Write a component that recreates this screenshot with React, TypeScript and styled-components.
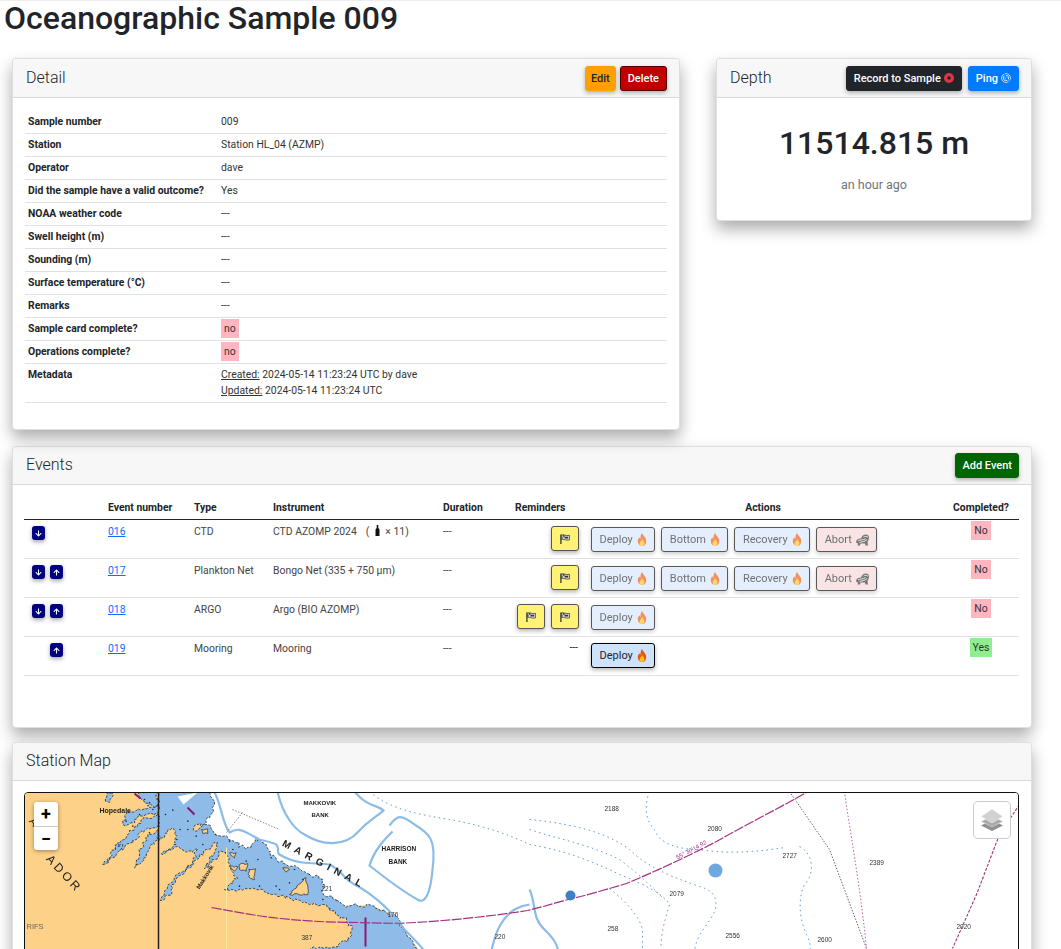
import React from 'react';
import styled, { createGlobalStyle } from 'styled-components';
import { FaArrowDown, FaArrowUp } from 'react-icons/fa';

const GlobalStyle = createGlobalStyle`
    html, body {
        margin: 0;
        height: 949px;
        overflow: hidden;
        background: #fff;
        font-family: Roboto, 'Liberation Sans', sans-serif;
        color: #212529;
    }
    * {
        box-sizing: border-box;
    }
`;

const Page = styled.div`
    width: 1061px;
    border-top: 1px solid #eee;
    padding: 0 29px 0 12px;
`;

const Heading = styled.h1`
    margin: 0 0 22px -8px;
    font-size: 32px;
    line-height: 35px;
    font-weight: 500;
`;

const TopRow = styled.div`
    display: flex;
    align-items: flex-start;
    gap: 36px;
    margin-bottom: 16px;
`;

const Card = styled.section<{ $width?: number; $gap?: number }>`
    width: ${({ $width }) => ($width ? `${$width}px` : '100%')};
    flex: none;
    background: #fff;
    border: 1px solid rgba(0, 0, 0, 0.125);
    border-radius: 4px;
    box-shadow: 0 8px 16px rgba(0, 0, 0, 0.33);
    margin-bottom: ${({ $gap }) => $gap ?? 0}px;
`;

const CardHeader = styled.header<{ $compact?: boolean }>`
    height: ${({ $compact }) => ($compact ? 38 : 39)}px;
    display: flex;
    align-items: center;
    justify-content: space-between;
    padding: 0 12px 0 13px;
    background: #f7f7f7;
    border-bottom: 1px solid rgba(0, 0, 0, 0.125);
    border-radius: 3px 3px 0 0;
`;

const CardTitle = styled.h2`
    margin: 0 0 2px;
    font-size: 16px;
    font-weight: 300;
`;

const HeaderActions = styled.div`
    display: flex;
    align-items: center;
    gap: 4px;
`;

const DepthActions = styled(HeaderActions)`
    gap: 6px;
`;

const ActionButton = styled.button<{ $bg: string; $fg?: string; $edge?: string; $pad?: number }>`
    height: 25px;
    padding: 0 ${({ $pad }) => $pad ?? 6}px;
    display: inline-flex;
    align-items: center;
    gap: 3px;
    font: 500 11px Roboto, sans-serif;
    color: ${({ $fg }) => $fg ?? '#fff'};
    background: ${({ $bg }) => $bg};
    border: 1px solid ${({ $edge, $bg }) => $edge ?? $bg};
    border-radius: 3px;
    box-shadow: 0 2px 4px rgba(0, 0, 0, 0.3);
`;

const DetailBody = styled.div`
    padding: 12px 12px 26px;
`;

const DetailTable = styled.table`
    width: 100%;
    border-collapse: collapse;
    table-layout: fixed;
    font-size: 10.4px;
`;

const DetailRow = styled.tr`
    border-bottom: 1px solid #dee2e6;
`;

const DetailLabel = styled.th`
    width: 192px;
    height: 23px;
    padding: 0 4px 0 3px;
    font-weight: 700;
    text-align: left;
    vertical-align: middle;
    white-space: nowrap;
`;

const DetailValue = styled.td`
    height: 23px;
    padding: 0 4px;
    vertical-align: middle;
    color: #333;
`;

const MetaLabel = styled(DetailLabel)`
    height: 39px;
    padding-top: 4px;
    vertical-align: top;
`;

const MetaValue = styled(DetailValue)`
    padding-top: 3px;
    vertical-align: top;
    line-height: 16px;
`;

const Underlined = styled.span`
    text-decoration: underline;
`;

const Flag = styled.span<{ $ok?: boolean }>`
    display: inline-block;
    padding: 0 3px;
    line-height: 19px;
    color: #333;
    background: ${({ $ok }) => ($ok ? '#90ee90' : '#ffb6c1')};
`;

const DepthBody = styled.div`
    height: 122px;
    padding-top: 27px;
    text-align: center;
`;

const DepthValue = styled.div`
    font-size: 32px;
    line-height: 36px;
    font-weight: 500;
`;

const DepthAge = styled.div`
    margin-top: 16px;
    font-size: 12.5px;
    color: #6c757d;
`;

const EventsBody = styled.div`
    height: 242px;
    padding: 15px 12px 0 11px;
`;

const EventsTable = styled.table`
    width: 995px;
    border-collapse: collapse;
    table-layout: fixed;
    font-size: 10.4px;
    color: #444;
`;

const HeadCell = styled.th<{ $center?: boolean }>`
    height: 20px;
    padding: 0 4px 5px;
    text-align: ${({ $center }) => ($center ? 'center' : 'left')};
    vertical-align: bottom;
    font-weight: 700;
    color: #212529;
    border-bottom: 1px solid #212529;
`;

const EventRow = styled.tr`
    height: 39px;
    border-bottom: 1px solid #dee2e6;
`;

const EventCell = styled.td`
    padding: 5px 4px 0;
    vertical-align: top;
    text-align: left;
`;

const CompletedCell = styled(EventCell)`
    padding-top: 1px;
    text-align: center;
`;

const EventLink = styled.a`
    color: #0d6efd;
    text-decoration: underline;
`;

const MoveGroup = styled.div`
    display: flex;
    gap: 5px;
    padding: 1px 0 0 4px;
`;

const MoveButton = styled.button<{ $hidden?: boolean }>`
    width: 13px;
    height: 14px;
    padding: 0;
    display: flex;
    align-items: center;
    justify-content: center;
    color: #fff;
    background: #000080;
    border: 0;
    border-radius: 3px;
    box-shadow: 0 2px 4px rgba(0, 0, 0, 0.35);
    font-size: 7px;
    visibility: ${({ $hidden }) => ($hidden ? 'hidden' : 'visible')};
`;

const ReminderCell = styled(EventCell)`
    padding: 6px 4px 0 0;
    text-align: right;
`;

const ReminderGroup = styled.div`
    display: flex;
    justify-content: flex-end;
    gap: 6px;
`;

const ReminderButton = styled.button`
    width: 28px;
    height: 25px;
    padding: 0;
    display: flex;
    align-items: center;
    justify-content: center;
    background: #fff275;
    border: 1px solid #555;
    border-radius: 3px;
    box-shadow: 0 2px 4px rgba(0, 0, 0, 0.3);
`;

const NoReminder = styled.span`
    display: block;
    margin-top: -2px;
    padding-right: 1px;
    color: #212529;
`;

const ActionsGroup = styled.div`
    display: flex;
    gap: 6px;
    padding: 2px 0 0 4px;
`;

const StepButton = styled.button<{ $abort?: boolean; $ready?: boolean }>`
    height: 25px;
    margin-top: ${({ $ready }) => ($ready ? -1 : 0)}px;
    padding: 0 7.5px;
    display: inline-flex;
    align-items: center;
    gap: 4px;
    font: 400 11px Roboto, sans-serif;
    color: #212529;
    background: ${({ $abort, $ready }) => ($abort ? '#f5d5d8' : $ready ? '#cfe2fb' : '#d8e6fb')};
    border: 1px solid #000;
    border-radius: 3px;
    opacity: ${({ $ready }) => ($ready ? 1 : 0.65)};
    box-shadow: 0 2px 4px rgba(0, 0, 0, 0.3);
`;

const BottleNote = styled.span`
    margin-left: 9px;
`;

const Bottle = styled.svg`
    margin: 0 5px 0 6px;
    vertical-align: -1px;
`;

const MapBody = styled.div`
    padding: 11px 12px 12px 11px;
`;

const MapFrame = styled.div`
    position: relative;
    height: 400px;
    overflow: hidden;
    border: 1.5px solid #111;
    border-radius: 4px;
    background: #fff;
`;

const ChartImage = styled.svg`
    display: block;
    filter: blur(0.4px);
`;

const ZoomControl = styled.div`
    position: absolute;
    top: 9px;
    left: 9px;
    width: 24px;
    background: #fff;
    border-radius: 3px;
    box-shadow: 0 1px 4px rgba(0, 0, 0, 0.4);
`;

const ZoomButton = styled.button`
    display: block;
    width: 24px;
    height: 24px;
    padding: 0;
    background: none;
    border: 0;
    font: 700 18px/24px Roboto, sans-serif;
    color: #000;
    & + & {
        border-top: 1px solid #ccc;
    }
`;

const LayersControl = styled.div`
    position: absolute;
    top: 8px;
    right: 7px;
    width: 38px;
    height: 38px;
    display: flex;
    align-items: center;
    justify-content: center;
    background: #fff;
    border: 1px solid #ccc;
    border-radius: 5px;
`;

const Flame = () => (
    <svg width="10" height="13" viewBox="0 0 10 14">
        <path
            d="M5 0C5.6 2.4 9.6 4.6 9.6 8.8C9.6 11.8 7.6 14 5 14C2.4 14 .4 11.9 .4 9C.4 7 1.4 5.6 2.2 4.6C2.4 5.6 2.8 6.2 3.4 6.4C3.2 4 3.6 1.8 5 0Z"
            fill="#e8590c"
        />
        <path
            d="M5.2 6.4C5.6 8 7.6 9 7.6 11C7.6 12.6 6.4 14 5 14C3.6 14 2.4 12.8 2.4 11.2C2.4 9.6 4.6 8.4 5.2 6.4Z"
            fill="#fcc21b"
        />
    </svg>
);

const Skunk = () => (
    <svg width="13" height="12" viewBox="0 0 13 12">
        <path
            d="M0 8.500C0 6 2 4.500 5 4.500C6 2 7.500 .5 10 .5C12 .5 13 2 13 3.500C13 5.500 12 6.500 11.500 8L12 11.500H9.500L9 9.500H4.500L4 11.500H1.500L2 9.500Z"
            fill="#2f2f2f"
        />
        <path d="M2 7C4 5.500 7 6.500 9.500 4.500M3.500 8.500C6 7.500 8.500 8 11 5.500M7.500 3C9 2 10.500 2.200 12 3.200" stroke="#eee" strokeWidth=".9" fill="none" />
    </svg>
);

const CheckeredFlag = () => (
    <svg width="10" height="10" viewBox="0 0 11 11">
        <path d="M1 0.500V11" stroke="#333" strokeWidth="1.4" />
        <path d="M1.500 1C4 0 6 2.500 10.500 1.500V6.500C6 7.500 4 5 1.500 6Z" fill="#ddd" stroke="#333" strokeWidth=".8" />
        <path d="M3 1V3H5V5H7V3H5V1.500ZM7 3H9V5H7ZM3 3.500H1.500V5H3Z" fill="#333" />
    </svg>
);

const RecordIcon = () => (
    <svg width="10" height="10" viewBox="0 0 10 10">
        <circle cx="5" cy="5" r="5" fill="#dc3545" />
        <circle cx="5" cy="5" r="1.700" fill="#212529" />
    </svg>
);

const PingIcon = () => (
    <svg width="10" height="10" viewBox="0 0 10 10" fill="none" stroke="#cfe4ff" strokeWidth=".9">
        <circle cx="5" cy="5" r="4.400" />
        <circle cx="5" cy="5" r="2.700" />
        <circle cx="5" cy="5" r="1" />
        <path d="M3.500 0.500L5 5L8.500 8.500" stroke="#007bff" strokeWidth="1.200" />
    </svg>
);

const LayersIcon = () => (
    <svg width="24" height="24" viewBox="0 0 24 24">
        <path d="M12 12L23 17.500L12 23L1 17.500Z" fill="#8f8f8f" />
        <path d="M12 8L23 13.500L12 19L1 13.500Z" fill="#ababab" stroke="#fff" strokeWidth=".4" />
        <path d="M12 1L23 8.500L12 15L1 8.500Z" fill="#d2d2d2" stroke="#fff" strokeWidth=".4" />
    </svg>
);

// deterministic wobble so the coast reads as a coast rather than a polygon
let seed = 17;
const wobble = () => {
    seed = (seed * 9301 + 49297) % 233280;
    return seed / 233280 - 0.5;
};

const roughen = (points: number[][], amount: number, step = 2.5) => {
    const out: string[] = [];
    points.forEach(([x, y], i) => {
        const [nx, ny] = points[i + 1] ?? points[0];
        const count = Math.max(1, Math.round(Math.hypot(nx - x, ny - y) / step));
        for (let c = 0; c < count; c++) {
            const t = c / count;
            const jx = c === 0 ? 0 : wobble() * amount;
            const jy = c === 0 ? 0 : wobble() * amount;
            out.push(`${(x + (nx - x) * t + jx).toFixed(1)} ${(y + (ny - y) * t + jy).toFixed(1)}`);
        }
    });
    return `M${out.join('L')}Z`;
};

// coast points were read off a 3x crop whose corner is at (90, 790)
const fromCrop = (points: number[][]) => points.map(([x, y]) => [90 + x / 3, 790 + y / 3]);

const WATER = roughen(
    fromCrop([
        [205, 5], [360, 5], [375, 45], [350, 100], [315, 108], [318, 125], [345, 105], [400, 140], [440, 160],
        [470, 180], [505, 145], [530, 170], [560, 210], [610, 230], [650, 250], [700, 270], [700, 310], [765, 348],
        [846, 348], [918, 378], [948, 429], [1011, 510], [630, 510], [639, 480], [747, 471], [786, 438], [786, 408],
        [760, 385], [700, 345], [640, 340], [600, 325],
        [550, 315], [500, 300], [440, 305], [405, 300], [445, 268], [420, 230], [412, 185], [395, 185], [378, 210],
        [345, 238], [375, 190], [385, 160], [350, 180], [330, 205], [300, 235], [265, 262], [245, 290], [243, 318],
        [212, 333], [235, 290], [270, 250], [310, 215], [325, 178], [290, 188], [260, 172], [215, 193], [260, 165],
        [262, 140], [250, 115], [212, 150], [205, 155],
    ]),
    4,
);

const LEFT_FINGERS = [
    [[135, 5], [205, 5], [205, 45], [175, 50], [160, 30]],
    [[205, 45], [150, 60], [115, 65], [100, 105], [125, 100], [160, 80], [205, 70]],
    [[205, 75], [160, 90], [120, 130], [75, 175], [95, 182], [140, 150], [175, 115], [205, 110]],
    [[205, 120], [175, 145], [150, 190], [135, 235], [150, 225], [185, 165], [205, 150]],
    [[40, 225], [70, 205], [100, 165], [85, 165], [60, 205]],
    [[48, 35], [60, 8], [72, 8], [62, 30]],
].map((finger) => roughen(fromCrop(finger), 4));

const ORANGE_PATCHES = [
    [[600, 315], [650, 265], [655, 315]],
    [[450, 225], [475, 222], [470, 245], [450, 240]],
    [[478, 240], [498, 238], [495, 270], [478, 262]],
    [[420, 230], [445, 232], [435, 245]],
    [[336, 120], [355, 118], [355, 132], [340, 132]],
    [[580, 235], [600, 240], [590, 248]],
    [[420, 190], [440, 190], [435, 205]],
].map((patch) => roughen(fromCrop(patch), 2, 2));

const REEFS = [
    [272, 120], [295, 95], [262, 150], [340, 165], [378, 135], [430, 180], [505, 210], [545, 205], [470, 215], [615, 240],
    [570, 300], [510, 290], [450, 290], [640, 270], [600, 280], [228, 75], [250, 62], [180, 40], [165, 30], [190, 60],
    [150, 75], [110, 95], [130, 110], [88, 170], [180, 130], [320, 140], [295, 120], [420, 155], [560, 290], [700, 330],
];

const CONTOURS = [
    'M278 792C283 815 295 830 305 835C322 846 345 848 359 832C368 822 380 815 384 811C378 805 368 808 355 792',
    'M390 826C398 815 402 815 415 825C430 834 437 840 433 870C431 895 425 905 418 900C400 890 385 878 370 866C375 850 385 840 393 832',
    'M215 793C222 805 222 822 230 833C238 828 243 831 247 833C253 836 256 838 260 840C268 842 273 843 277 845C280 850 277 853 280 855C288 860 295 862 303 863C312 864 322 864 330 865C336 868 340 872 343 875C347 880 352 883 355 885C375 895 395 915 405 930C415 940 425 950 430 958',
    'M530 890C537 905 532 918 545 930C553 938 559 945 559 955',
    'M490 960C495 935 500 920 515 910C522 906 530 905 530 905',
];

const DOTTED_BLUE = [
    'M530 830C560 840 590 845 620 860C640 875 650 885 665 900',
    'M530 845C560 850 590 860 620 875C645 885 665 895 670 905C666 920 660 935 662 955',
    'M530 820C580 825 610 835 630 850C650 870 680 880 700 887C717 892 717 900 716 910C710 925 695 935 695 955',
    'M650 792C645 805 645 820 655 830C660 845 680 850 700 850C730 855 760 852 785 848',
    'M800 847C815 855 815 875 805 885C798 900 800 920 807 935C810 942 812 945 810 955',
    'M610 889C630 905 640 918 643 930V950',
    'M370 792C390 810 420 815 450 820C480 825 510 835 530 845',
];

const DEPTHS: [string, number, number][] = [
    ['2188', 613, 811], ['2080', 716, 831], ['2727', 791, 858], ['2389', 878, 865], ['2079', 678, 896], ['258', 616, 931],
    ['2556', 734, 938], ['2600', 826, 942], ['2020', 965, 929], ['220', 503, 939], ['176', 396, 917], ['221', 330, 891],
    ['387', 310, 940],
];

const ChartText = styled.text<{ $size: number; $fill?: string; $weight?: number; $spacing?: number }>`
    font-family: 'Liberation Sans', sans-serif;
    font-size: ${({ $size }) => $size}px;
    font-weight: ${({ $weight }) => $weight ?? 400};
    letter-spacing: ${({ $spacing }) => $spacing ?? 0}px;
    fill: ${({ $fill }) => $fill ?? '#222'};
`;

const StationChart = () => (
    <ChartImage width="995" height="400" viewBox="25.500 793.500 995 400">
        <rect x="25" y="792" width="995" height="402" fill="#fff" />
        <rect x="25" y="792" width="400" height="170" fill="#fdd188" />
        <path d="M210 792H1020V960H427L406 933L396 916L372 906L345 906L322 899L322 879L301 876L281 865L264 862L244 848L223 838L203 828Z" fill="#fff" />
        <path d={WATER} fill="#8ebbe8" stroke="#1b2a3a" strokeWidth=".8" strokeDasharray="2.500 1.500" />
        {LEFT_FINGERS.map((d) => (
            <path key={d} d={d} fill="#8ebbe8" stroke="#1b2a3a" strokeWidth=".8" strokeDasharray="2.500 1.500" />
        ))}
        {ORANGE_PATCHES.map((d) => (
            <path key={d} d={d} fill="#fdd188" stroke="#1b2a3a" strokeWidth=".7" />
        ))}
        <path d="M178 797L198 793L184 805Z" fill="#fff" />
        {fromCrop(REEFS).map(([x, y]) => (
            <circle key={`${x}-${y}`} cx={x} cy={y} r=".8" fill="#1b2a3a" />
        ))}
        {CONTOURS.map((d) => (
            <path key={d} d={d} fill="none" stroke="#8bbce8" strokeWidth="2.200" />
        ))}
        {DOTTED_BLUE.map((d) => (
            <path key={d} d={d} fill="none" stroke="#5b9bd8" strokeWidth="1" strokeDasharray="1.500 3.500" />
        ))}
        <path d="M159 792V960" stroke="#222" strokeWidth="1.500" />
        <path d="M227 848V960" stroke="#ffe89a" strokeWidth="1" />
        <path d="M135 794L141 799M188 808L195 815M366 918V947" fill="none" stroke="#8a1a70" strokeWidth="2" />
        <path d="M233 810L280 830M243 813L227 833" fill="none" stroke="#666" strokeWidth=".8" strokeDasharray="1.500 1.500" />
        <path d="M212 908C240 913 260 917 281 919C310 922 335 923 359 923C385 924 400 924 416 923C450 921 490 917 528 911C545 907 560 902 573 899C590 895 610 889 627 884C660 870 690 856 717 842C745 826 775 811 807 793" fill="none" stroke="#a2307f" strokeWidth="1.200" strokeDasharray="10 1.500" />
        <path d="M790 792L830 850L867 949" fill="none" stroke="#666" strokeWidth="1" strokeDasharray="1.500 1.500" />
        <path d="M845 792C850 830 860 880 867 949" fill="none" stroke="#c060a8" strokeWidth="1" strokeDasharray="1.500 2" />
        <path d="M1020 805L1000 835L977 895L953 949" fill="none" stroke="#a2307f" strokeWidth="1.100" strokeDasharray="3 1.500" />
        <circle cx="716" cy="871" r="7" fill="#6fa8e0" />
        <circle cx="571" cy="896" r="5" fill="#3f7fc4" />
        <ChartText x="100" y="813" $size={7} $weight={700}>Hopedale</ChartText>
        <ChartText x="304" y="805" $size={6} $weight={700}>MAKKOVIK</ChartText>
        <ChartText x="312" y="817" $size={6} $weight={700}>BANK</ChartText>
        <ChartText x="382" y="851" $size={6.500} $weight={700}>HARRISON</ChartText>
        <ChartText x="389" y="864" $size={6.500} $weight={700}>BANK</ChartText>
        <ChartText x="282" y="846" $size={10} $weight={700} $spacing={5} transform="rotate(28 282 846)">MARGINAL</ChartText>
        <ChartText x="29" y="822" $size={11} transform="rotate(50 29 822)">A</ChartText>
        <ChartText x="46" y="860" $size={12} $spacing={3} transform="rotate(47 46 860)">ADOR</ChartText>
        <ChartText x="27" y="929" $size={7.500} $fill="#666">RIFS</ChartText>
        <ChartText x="200" y="890" $size={6} $weight={700} transform="rotate(-58 200 890)">Makkovik</ChartText>
        <ChartText x="678" y="860" $size={6} $fill="#a2307f" transform="rotate(-28 678 860)">55° 30'14.92</ChartText>
        {DEPTHS.map(([label, x, y]) => (
            <ChartText key={label} x={x - 8} y={y} $size={6.500} $fill="#333">{label}</ChartText>
        ))}
    </ChartImage>
);

const DETAILS: [string, string][] = [
    ['Sample number', '009'],
    ['Station', 'Station HL_04 (AZMP)'],
    ['Operator', 'dave'],
    ['Did the sample have a valid outcome?', 'Yes'],
    ['NOAA weather code', '---'],
    ['Swell height (m)', '---'],
    ['Sounding (m)', '---'],
    ['Surface temperature (°C)', '---'],
    ['Remarks', '---'],
];

interface IEvent {
    number: string;
    type: string;
    instrument: React.ReactNode;
    down: boolean;
    up: boolean;
    reminders: number;
    steps: string[];
    ready?: boolean;
    completed: boolean;
}

const EVENTS: IEvent[] = [
    {
        number: '016',
        type: 'CTD',
        instrument: (
            <>
                CTD AZOMP 2024
                <BottleNote>
                    (
                    <Bottle width="5" height="11" viewBox="0 0 5 11">
                        <path d="M1.700 0H3.300V3L4.500 4.500V11H.5V4.500L1.700 3Z" fill="#111" />
                    </Bottle>
                    × 11)
                </BottleNote>
            </>
        ),
        down: true,
        up: false,
        reminders: 1,
        steps: ['Deploy', 'Bottom', 'Recovery', 'Abort'],
        completed: false,
    },
    {
        number: '017',
        type: 'Plankton Net',
        instrument: 'Bongo Net (335 + 750 µm)',
        down: true,
        up: true,
        reminders: 1,
        steps: ['Deploy', 'Bottom', 'Recovery', 'Abort'],
        completed: false,
    },
    {
        number: '018',
        type: 'ARGO',
        instrument: 'Argo (BIO AZOMP)',
        down: true,
        up: true,
        reminders: 2,
        steps: ['Deploy'],
        completed: false,
    },
    {
        number: '019',
        type: 'Mooring',
        instrument: 'Mooring',
        down: false,
        up: true,
        reminders: 0,
        steps: ['Deploy'],
        ready: true,
        completed: true,
    },
];

const COLUMN_WIDTHS = [80, 86, 79, 170, 72, 72, 360, 76];

const App = () => (
    <Page>
        <GlobalStyle />
        <Heading>Oceanographic Sample 009</Heading>
        <TopRow>
            <Card $width={668}>
                <CardHeader>
                    <CardTitle>Detail</CardTitle>
                    <HeaderActions>
                        <ActionButton $bg="#ffa000" $fg="#212529" $pad={5}>Edit</ActionButton>
                        <ActionButton $bg="#c00000" $edge="#500" $pad={7}>Delete</ActionButton>
                    </HeaderActions>
                </CardHeader>
                <DetailBody>
                    <DetailTable>
                        <tbody>
                            {DETAILS.map(([label, value]) => (
                                <DetailRow key={label}>
                                    <DetailLabel>{label}</DetailLabel>
                                    <DetailValue>{value}</DetailValue>
                                </DetailRow>
                            ))}
                            <DetailRow>
                                <DetailLabel>Sample card complete?</DetailLabel>
                                <DetailValue><Flag>no</Flag></DetailValue>
                            </DetailRow>
                            <DetailRow>
                                <DetailLabel>Operations complete?</DetailLabel>
                                <DetailValue><Flag>no</Flag></DetailValue>
                            </DetailRow>
                            <DetailRow>
                                <MetaLabel>Metadata</MetaLabel>
                                <MetaValue>
                                    <Underlined>Created:</Underlined> 2024-05-14 11:23:24 UTC by dave
                                    <br />
                                    <Underlined>Updated:</Underlined> 2024-05-14 11:23:24 UTC
                                </MetaValue>
                            </DetailRow>
                        </tbody>
                    </DetailTable>
                </DetailBody>
            </Card>
            <Card $width={316}>
                <CardHeader>
                    <CardTitle>Depth</CardTitle>
                    <DepthActions>
                        <ActionButton $bg="#212529" $pad={7}>Record to Sample <RecordIcon /></ActionButton>
                        <ActionButton $bg="#007bff" $pad={7}>Ping <PingIcon /></ActionButton>
                    </DepthActions>
                </CardHeader>
                <DepthBody>
                    <DepthValue>11514.815 m</DepthValue>
                    <DepthAge>an hour ago</DepthAge>
                </DepthBody>
            </Card>
        </TopRow>
        <Card $gap={14}>
            <CardHeader $compact>
                <CardTitle>Events</CardTitle>
                <ActionButton $bg="#006400">Add Event</ActionButton>
            </CardHeader>
            <EventsBody>
                <EventsTable>
                    <colgroup>
                        {COLUMN_WIDTHS.map((width, i) => (
                            <col key={i} width={width} />
                        ))}
                    </colgroup>
                    <thead>
                        <tr>
                            <HeadCell />
                            <HeadCell>Event number</HeadCell>
                            <HeadCell>Type</HeadCell>
                            <HeadCell>Instrument</HeadCell>
                            <HeadCell>Duration</HeadCell>
                            <HeadCell>Reminders</HeadCell>
                            <HeadCell $center>Actions</HeadCell>
                            <HeadCell $center>Completed?</HeadCell>
                        </tr>
                    </thead>
                    <tbody>
                        {EVENTS.map((event) => (
                            <EventRow key={event.number}>
                                <EventCell>
                                    <MoveGroup>
                                        <MoveButton $hidden={!event.down}><FaArrowDown /></MoveButton>
                                        <MoveButton $hidden={!event.up}><FaArrowUp /></MoveButton>
                                    </MoveGroup>
                                </EventCell>
                                <EventCell><EventLink href="#">{event.number}</EventLink></EventCell>
                                <EventCell>{event.type}</EventCell>
                                <EventCell>{event.instrument}</EventCell>
                                <EventCell>---</EventCell>
                                <ReminderCell>
                                    {event.reminders === 0 ? (
                                        <NoReminder>---</NoReminder>
                                    ) : (
                                        <ReminderGroup>
                                            {Array.from({ length: event.reminders }, (_, i) => (
                                                <ReminderButton key={i}><CheckeredFlag /></ReminderButton>
                                            ))}
                                        </ReminderGroup>
                                    )}
                                </ReminderCell>
                                <EventCell>
                                    <ActionsGroup>
                                        {event.steps.map((step) => (
                                            <StepButton key={step} $abort={step === 'Abort'} $ready={event.ready}>
                                                {step} {step === 'Abort' ? <Skunk /> : <Flame />}
                                            </StepButton>
                                        ))}
                                    </ActionsGroup>
                                </EventCell>
                                <CompletedCell>
                                    <Flag $ok={event.completed}>{event.completed ? 'Yes' : 'No'}</Flag>
                                </CompletedCell>
                            </EventRow>
                        ))}
                    </tbody>
                </EventsTable>
            </EventsBody>
        </Card>
        <Card>
            <CardHeader $compact>
                <CardTitle>Station Map</CardTitle>
            </CardHeader>
            <MapBody>
                <MapFrame>
                    <StationChart />
                    <ZoomControl>
                        <ZoomButton>+</ZoomButton>
                        <ZoomButton>−</ZoomButton>
                    </ZoomControl>
                    <LayersControl><LayersIcon /></LayersControl>
                </MapFrame>
            </MapBody>
        </Card>
    </Page>
);

export default App;
